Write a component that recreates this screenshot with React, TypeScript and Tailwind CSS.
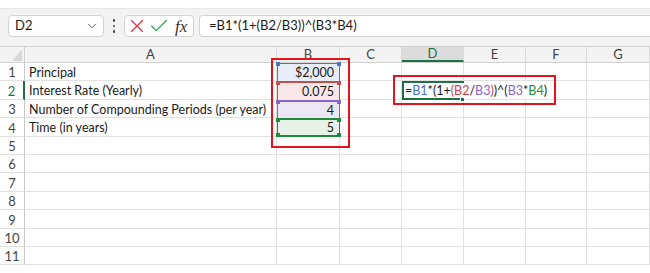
import { ChevronDown, X, Check } from 'lucide-react';

const COLS = [
  { key: 'A', w: 'w-[252px]' },
  { key: 'B', w: 'w-[63px]' },
  { key: 'C', w: 'w-[62px]' },
  { key: 'D', w: 'w-[62px]' },
  { key: 'E', w: 'w-[62px]' },
  { key: 'F', w: 'w-[61px]' },
  { key: 'G', w: 'flex-1' },
];

const LABELS = ['Principal', 'Interest Rate (Yearly)', 'Number of Compounding Periods (per year)', 'Time (in years)'];
const VALUES = ['$2,000', '0.075', '4', '5'];

// reference highlight for B1..B4
const REFS = [
  { cell: 'bg-[#e8eef9] border-x border-[#4a78c8] border-t', dot: 'bg-[#4a78c8]' },
  { cell: 'bg-[#f9e7e8] border-x border-[#c0504d] border-t-2', dot: 'bg-[#c0504d]' },
  { cell: 'bg-[#ece6f5] border-x border-[#8a63c9] border-t-2', dot: 'bg-[#8a63c9]' },
  { cell: 'bg-[#e6f2e8] border-x border-[#1f8a3c] border-y-2', dot: 'bg-[#1f8a3c]' },
];

const grid = 'border-[#e1e1e1]';

function Formula() {
  return (
    <span className="whitespace-nowrap text-[#1a1a1a]">
      =<span className="text-[#3f6fd0]">B1</span>*(1+<span className="text-[#d0404a]">(B2</span>/<span className="text-[#8a63c9]">B3</span><span className="text-[#d0404a]">)</span>)^(<span className="text-[#8a63c9]">B3</span>*<span className="text-[#1f8a3c]">B4</span>)
    </span>
  );
}

function Cell({ row, col, w }: { row: number; col: string; w: string }) {
  if (col === 'A') {
    return (
      <div className={`${w} h-full flex items-center pt-[3px] pl-[4px] border-r border-b ${grid} whitespace-nowrap`}>
        {LABELS[row - 1] ?? ''}
      </div>
    );
  }
  if (col === 'B' && row <= 4) {
    const r = REFS[row - 1];
    return (
      <div className={`${w} h-full relative flex items-center justify-end pt-[2px] pr-[5px] ${r.cell}`}>
        {VALUES[row - 1]}
        <span className={`absolute left-[-2px] top-[-2px] w-[4px] h-[4px] ${r.dot}`} />
        <span className={`absolute right-[-2px] top-[-2px] w-[4px] h-[4px] ${r.dot}`} />
        {row === 4 && (
          <>
            <span className={`absolute left-[-2px] bottom-[-2px] w-[4px] h-[4px] ${r.dot}`} />
            <span className={`absolute right-[-2px] bottom-[-2px] w-[4px] h-[4px] ${r.dot}`} />
          </>
        )}
      </div>
    );
  }
  if (col === 'D' && row === 2) {
    return (
      <div className={`${w} h-full relative flex items-center pt-[1px] pl-[1px] border-l-2 border-y-2 border-[#1e7145]`}>
        <Formula />
        <span className="absolute right-[-1px] bottom-[-4px] w-[5px] h-[5px] bg-[#1e7145] border border-white" />
      </div>
    );
  }
  const noRight = row === 2 && col === 'E';
  return <div className={`${w} h-full border-b ${grid} ${noRight ? '' : 'border-r'}`} />;
}

export default function App() {
  const rows = Array.from({ length: 11 }, (_, i) => i + 1);
  return (
    <div
      className="relative w-[650px] h-[273px] overflow-hidden bg-white text-[12.5px] text-[#1a1a1a]"
      style={{ fontFamily: 'Lato, "Noto Sans", sans-serif' }}
    >
      {/* top strip */}
      <div className="h-[9px] bg-white border-b border-[#e6e6e6]" />

      {/* formula bar */}
      <div className="h-[37px] bg-[#f3f3f3] flex items-start pt-[6px] pl-[8px]">
        <div className="w-[96px] h-[22px] bg-white border border-[#d4d4d4] rounded-[4px] flex items-center justify-between pl-[6px] pr-[4px] text-[13px]">
          <span>D2</span>
          <ChevronDown size={14} strokeWidth={1.5} className="text-[#444]" />
        </div>
        <div className="w-[20px] h-[22px] flex flex-col items-center justify-center gap-[3px]">
          <span className="w-[2.5px] h-[2.5px] bg-[#444] rounded-full" />
          <span className="w-[2.5px] h-[2.5px] bg-[#444] rounded-full" />
          <span className="w-[2.5px] h-[2.5px] bg-[#444] rounded-full" />
        </div>
        <div className="w-[70px] h-[22px] bg-white border border-[#d4d4d4] rounded-[4px] flex items-center pl-[1px]">
          <X size={22} strokeWidth={1.3} className="text-[#e0303c] shrink-0" />
          <Check size={22} strokeWidth={1.3} className="text-[#2e9b48] shrink-0" />
          <span className="ml-[5px] text-[17px] italic text-[#333] leading-none" style={{ fontFamily: '"Liberation Serif", serif' }}>fx</span>
        </div>
        <div className="ml-[5px] flex-1 h-[22px] bg-white border border-[#d4d4d4] border-r-0 rounded-l-[4px] flex items-center pl-[9px] text-[13px]">
          =B1*(1+(B2/B3))^(B3*B4)
        </div>
      </div>

      {/* column headers */}
      <div className="h-[17px] flex bg-[#f3f3f3] border-t border-b border-[#d0d0d0] text-[13px] text-[#444]">
        <div className="w-[25px] h-full relative border-r border-[#d0d0d0]">
          <span
            className="absolute right-[2px] bottom-[1px] w-[10px] h-[12px] bg-[#d8d8d8]"
            style={{ clipPath: 'polygon(100% 0, 100% 100%, 0 100%)' }}
          />
        </div>
        {COLS.map(c => (
          <div
            key={c.key}
            className={`${c.w} h-full flex items-center justify-center pt-[1px] border-r border-[#dadada] ${
              c.key === 'D' ? 'bg-[#dcdcdc] text-[#1e7145] border-b-2 border-b-[#1e7145]' : ''
            }`}
          >
            {c.key}
          </div>
        ))}
      </div>

      {/* rows */}
      {rows.map(r => (
        <div key={r} className="h-[18.4px] flex">
          <div
            className={`w-[25px] h-full flex items-center justify-center pt-[3px] border-b ${grid} text-[13px] ${
              r === 2 ? 'text-[#1e7145] border-r-2 border-r-[#1e7145]' : 'text-[#444] border-r border-r-[#c8c8c8]'
            }`}
          >
            {r}
          </div>
          {COLS.map(c => (
            <Cell key={c.key} row={r} col={c.key} w={c.w} />
          ))}
        </div>
      ))}

      {/* red callout boxes */}
      <div className="absolute left-[271px] top-[58px] w-[79px] h-[90px] border-2 border-[#e3141b]" />
      <div className="absolute left-[393px] top-[75px] w-[163px] h-[30px] border-2 border-[#e3141b]" />
    </div>
  );
}
